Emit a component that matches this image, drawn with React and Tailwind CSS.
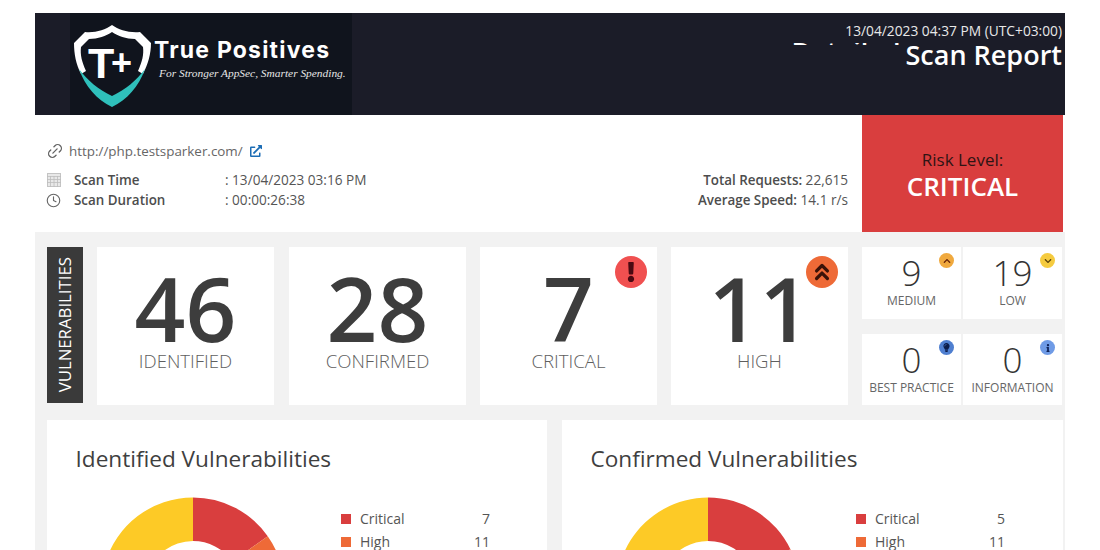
import { Link2, Clock, ChevronsUp } from 'lucide-react';
import { FaExclamation, FaChevronUp, FaChevronDown, FaLightbulb, FaInfo, FaExternalLinkAlt } from 'react-icons/fa';

const font = { fontFamily: '"Open Sans", "Noto Sans", sans-serif' };

const colors = { critical: '#d93e3e', high: '#ee6a37', medium: '#f2a33a', low: '#fdca26' };

function polar(cx, cy, r, deg) {
  const a = (deg - 90) * Math.PI / 180;
  return [cx + r * Math.cos(a), cy + r * Math.sin(a)];
}

function slice(start, end) {
  const R = 91.5, r = 48, c = 92;
  const large = end - start > 180 ? 1 : 0;
  const [x1, y1] = polar(c, c, R, start);
  const [x2, y2] = polar(c, c, R, end);
  const [x3, y3] = polar(c, c, r, end);
  const [x4, y4] = polar(c, c, r, start);
  return `M${x1} ${y1}A${R} ${R} 0 ${large} 1 ${x2} ${y2}L${x3} ${y3}A${r} ${r} 0 ${large} 0 ${x4} ${y4}Z`;
}

function Donut({ data }) {
  const total = data.reduce((s, d) => s + d.value, 0);
  let at = 0;
  return (
    <svg width="184" height="184" viewBox="0 0 184 184" className="shrink-0">
      {data.map(d => {
        const start = at;
        at += (d.value / total) * 360;
        return <path key={d.name} d={slice(start, at)} fill={d.color} />;
      })}
    </svg>
  );
}

function Shield() {
  return (
    <svg width="80" height="86" viewBox="0 0 80 86" className="mt-[6px] shrink-0">
      <path
        fill="#ffffff"
        d="M39 1C32 6 22 9 12 8L1 19C1 30 3 40 8 50L13 47C9 38 7 31 8 23L16 15C25 15 33 12 39 8C45 12 53 15 62 15L70 23C71 31 69 38 65 47L70 50C75 40 78 30 78 19L67 8C56 9 46 6 39 1Z"
      />
      <path fill="#2fc0bb" d="M6 45C12 62 24 76 39 83C54 76 66 62 72 45C64 56 52 66 39 72C26 66 14 56 6 45Z" />
      <text x="15" y="54" fill="#ffffff" fontFamily="Liberation Sans, sans-serif" fontWeight="700" fontSize="43">T</text>
      <text x="38" y="51" fill="#ffffff" fontFamily="Liberation Sans, sans-serif" fontWeight="700" fontSize="36">+</text>
    </svg>
  );
}

function Logo() {
  return (
    <div className="ml-[35px] flex h-full w-[282px] items-center bg-[#10141d] pl-[3px]">
      <Shield />
      <div className="-mt-[13px] ml-[1px]">
        <div className="whitespace-nowrap text-[23px] font-bold leading-[30px] tracking-[1.2px] text-white" style={{ fontFamily: 'Inter, sans-serif' }}>
          True Positives
        </div>
        <div className="ml-[5px] mt-[1px] whitespace-nowrap text-[11.4px] italic leading-[14px] text-[#e6e6e6]" style={{ fontFamily: '"Liberation Serif", serif' }}>
          For Stronger AppSec, Smarter Spending.
        </div>
      </div>
    </div>
  );
}

function CalendarIcon() {
  return (
    <svg width="14" height="14" viewBox="0 0 14 14" className="shrink-0">
      <rect x="0.5" y="0.5" width="13" height="13" fill="#e8e8e8" stroke="#c4c4c4" />
      <path d="M0 3.5H14M0 6.5H14M0 9.5H14M3.5 3V14M7 3V14M10.500 3V14" stroke="#bdbdbd" strokeWidth="0.8" />
    </svg>
  );
}

function Badge({ bg, fg, size, icon: Icon, iconSize, strokeWidth }) {
  return (
    <div
      className="absolute flex items-center justify-center rounded-full"
      style={{ backgroundColor: bg, width: size, height: size, top: size > 20 ? 9 : 6, right: size > 20 ? 10 : 7 }}
    >
      <Icon size={iconSize} color={fg} strokeWidth={strokeWidth} />
    </div>
  );
}

function StatCard({ value, label, badge, className = '' }) {
  return (
    <div className={`relative flex h-full w-[177px] flex-col items-center bg-white ${className}`}>
      {badge}
      <div className="mt-[17px] text-[89px] font-semibold leading-[88px] text-[#3d3d3d]">{value}</div>
      <div className="text-[18.600px] font-light leading-[18px] text-[#5e5e5e]">{label}</div>
    </div>
  );
}

function SmallCard({ value, label, badge }) {
  return (
    <div className="relative flex h-full w-[99px] flex-col items-center bg-white">
      {badge}
      <div className="mt-[5px] text-[35px] font-light leading-[42px] text-[#333333]">{value}</div>
      <div className="whitespace-nowrap text-[12px] leading-[14px] text-[#666666]">{label}</div>
    </div>
  );
}

function ChartPanel({ title, data, className }) {
  return (
    <div className={`h-[200px] bg-white ${className}`}>
      <h2 className="ml-[28.500px] mt-[23px] text-[22.600px] font-medium leading-[32px] text-[#3f3f3f]">{title}</h2>
      <div className="mt-[22px] flex">
        <div className="ml-[54px] w-[240px]">
          <Donut data={data} />
        </div>
        <div className="mt-[13px] w-[149px]">
          {data.slice(0, 2).map(d => (
            <div key={d.name} className="mb-[6px] flex h-[17px] items-center text-[14px] text-[#555555]">
              <span className="h-[10px] w-[10px]" style={{ backgroundColor: d.color }} />
              <span className="ml-[9px]">{d.name}</span>
              <span className="ml-auto">{d.value}</span>
            </div>
          ))}
        </div>
      </div>
    </div>
  );
}

const identified = [
  { name: 'Critical', value: 7, color: colors.critical },
  { name: 'High', value: 11, color: colors.high },
  { name: 'Medium', value: 9, color: colors.medium },
  { name: 'Low', value: 19, color: colors.low },
];

const confirmed = [
  { name: 'Critical', value: 5, color: colors.critical },
  { name: 'High', value: 11, color: colors.high },
  { name: 'Medium', value: 3, color: colors.medium },
  { name: 'Low', value: 9, color: colors.low },
];

export default function App() {
  return (
    <div className="h-[550px] overflow-hidden bg-white pt-[13px]" style={font}>
      <div className="mx-[35px] w-[1030px]">
        <header className="flex h-[102px] justify-between bg-[#1b1c28]">
          <Logo />
          <div className="pr-[3px] pt-[9px] text-right text-white">
            <div className="text-[13.750px] leading-[18px] text-[#e8e8e8]">13/04/2023 04:37 PM (UTC+03:00)</div>
            <div className="flex items-start justify-end">
              <div className="mr-[6px] mt-[3px] h-[2px] w-[108px] overflow-hidden">
                <div className="-mt-[9px] text-[27px] font-semibold leading-[36px]">Detailed</div>
              </div>
              <div className="-mt-[2px] text-[27px] font-semibold leading-[34px]">Scan Report</div>
            </div>
          </div>
        </header>

        <section className="flex h-[117px] bg-white">
          <div className="flex-1 pl-[11px] pr-[14px] text-[13.600px] text-[#555555]">
            <div className="mt-[26px] flex h-[20px] items-center">
              <Link2 size={18} strokeWidth={1.8} color="#666666" className="-rotate-45" />
              <span className="ml-[5px] text-[13.400px] text-[#666666]">http://php.testsparker.com/</span>
              <FaExternalLinkAlt size={12} color="#1c6db5" className="ml-[7px]" />
            </div>
            <div className="mt-[9px] flex justify-between">
              <div>
                <div className="flex h-[20px] items-center">
                  <span className="flex w-[28px] pl-[1px]"><CalendarIcon /></span>
                  <span className="w-[151px] text-[13.400px] font-semibold text-[#4d4d4d]">Scan Time</span>
                  <span>: 13/04/2023 03:16 PM</span>
                </div>
                <div className="flex h-[20px] items-center">
                  <span className="flex w-[28px]"><Clock size={15} strokeWidth={1.8} color="#666666" /></span>
                  <span className="w-[151px] text-[13.400px] font-semibold text-[#4d4d4d]">Scan Duration</span>
                  <span>: 00:00:26:38</span>
                </div>
              </div>
              <div className="text-right">
                <div className="h-[20px] leading-[20px]"><span className="text-[13.400px] font-semibold text-[#4d4d4d]">Total Requests:</span> 22,615</div>
                <div className="h-[20px] leading-[20px]"><span className="text-[13.400px] font-semibold text-[#4d4d4d]">Average Speed:</span> 14.1 r/s</div>
              </div>
            </div>
          </div>
          <div className="mr-[2px] flex w-[201px] flex-col items-center justify-center bg-[#d93e3e] pt-[3px]">
            <div className="text-[17px] leading-[22px] text-[#2f1414]">Risk Level:</div>
            <div className="text-[26px] font-semibold leading-[30px] text-white">CRITICAL</div>
          </div>
        </section>

        <section className="h-[400px] bg-[#f2f2f2] pl-[12px] pr-[2px] pt-[15px]">
          <div className="flex h-[158px]">
            <div className="flex h-[156px] w-[36px] items-center justify-center bg-[#3a3a3a]">
              <span className="rotate-180 text-[16.800px] text-white [writing-mode:vertical-rl]">VULNERABILITIES</span>
            </div>
            <div className="ml-[14px] flex gap-[14px]">
              <StatCard value="46" label="IDENTIFIED" />
              <StatCard value="28" label="CONFIRMED" className="ml-[1px]" />
              <StatCard
                value="7"
                label="CRITICAL"
                badge={<Badge bg="#f05050" fg="#4a0a12" size={32} icon={FaExclamation} iconSize={20} />}
              />
              <StatCard
                value="11"
                label="HIGH"
                badge={<Badge bg="#ee6a37" fg="#3a1208" size={32} icon={ChevronsUp} iconSize={26} strokeWidth={3} />}
              />
            </div>
            <div className="ml-[14px] flex flex-col justify-between">
              <div className="flex h-[72px] gap-[2px]">
                <SmallCard value="9" label="MEDIUM" badge={<Badge bg="#f0a93e" fg="#6a2508" size={15} icon={FaChevronUp} iconSize={8} />} />
                <SmallCard value="19" label="LOW" badge={<Badge bg="#f5cb3f" fg="#5a4208" size={15} icon={FaChevronDown} iconSize={8} />} />
              </div>
              <div className="flex h-[71px] gap-[2px]">
                <SmallCard value="0" label="BEST PRACTICE" badge={<Badge bg="#4f7fd0" fg="#0c1d4a" size={15} icon={FaLightbulb} iconSize={9} />} />
                <SmallCard value="0" label="INFORMATION" badge={<Badge bg="#6f9be6" fg="#10245a" size={15} icon={FaInfo} iconSize={8} />} />
              </div>
            </div>
          </div>
          <div className="mt-[15px] flex justify-between">
            <ChartPanel title="Identified Vulnerabilities" data={identified} className="w-[500px]" />
            <ChartPanel title="Confirmed Vulnerabilities" data={confirmed} className="w-[501px]" />
          </div>
        </section>
      </div>
    </div>
  );
}
